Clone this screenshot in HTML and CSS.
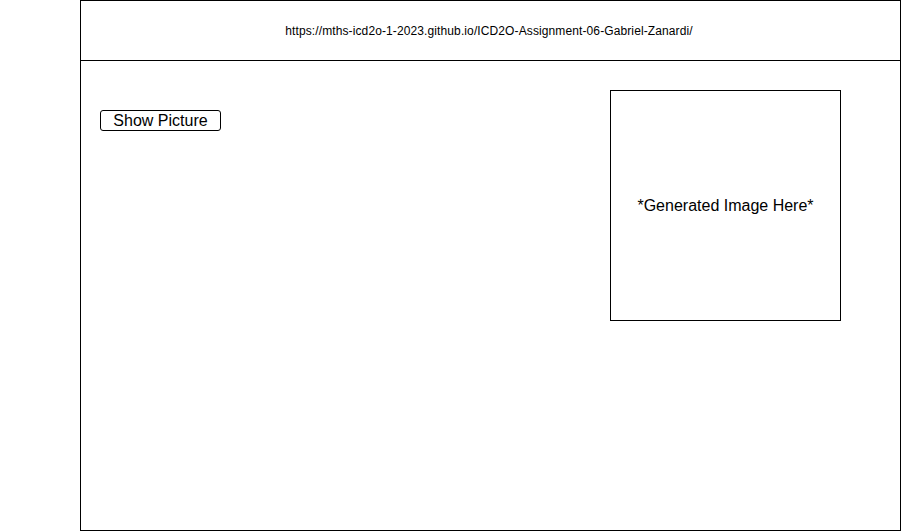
FILE: index.html
```html
<!DOCTYPE html>
<html lang="en">
<head>
    <meta charset="UTF-8">
    <meta name="viewport" content="width=device-width, initial-scale=1.0">
    <title>Assignment 06 Wireframe</title>
    <link rel="stylesheet" href="styles.css">
</head>
<body>

    <div class="frame">
        <div class="address-bar">https://mths-icd2o-1-2023.github.io/ICD2O-Assignment-06-Gabriel-Zanardi/</div>

        <div class="page">
            <button class="show-button">Show Picture</button>
            <div class="image-box">*Generated Image Here*</div>
        </div>
    </div>

</body>
</html>
```

FILE: styles.css
```css
body {
    margin: 0;
    background-color: white;
    color: black;
    font-family: "Liberation Sans", Arial, sans-serif;
}
.frame {
    box-sizing: border-box;
    margin-left: 80px;
    width: 821px;
    height: 531px;
    border: 1px solid black;
    display: flex;
    flex-direction: column;
}
.address-bar {
    height: 59px;
    border-bottom: 1px solid black;
    display: flex;
    align-items: center;
    justify-content: center;
    font-size: 12px;
    letter-spacing: 0.11px;
    padding-right: 3px;
}
.page {
    flex: 1;
    display: flex;
    justify-content: space-between;
    align-items: flex-start;
    padding: 29px 59px 0 19px;
}
.show-button {
    box-sizing: border-box;
    margin-top: 20px;
    width: 121px;
    height: 21px;
    padding: 0;
    background-color: white;
    border: 1px solid black;
    border-radius: 3px;
    font-family: inherit;
    font-size: 16px;
    line-height: 19px;
    color: black;
}
.image-box {
    box-sizing: border-box;
    width: 231px;
    height: 231px;
    border: 1px solid black;
    display: flex;
    align-items: center;
    justify-content: center;
    font-size: 16px;
}
```
